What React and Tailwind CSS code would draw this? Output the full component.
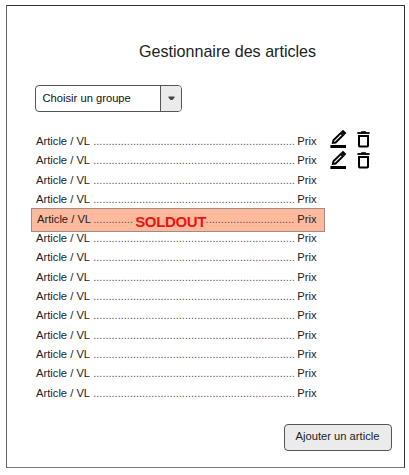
const ROWS = Array.from({ length: 14 }, (_, i) => ({ soldOut: i === 4, actions: i < 2, second: i === 1 }));

function EditIcon() {
  return (
    <svg width="18" height="19" viewBox="0 0 18 19" fill="none" stroke="#000">
      <path d="M2.9 12.9 L3.4 10.3 L10.8 3 L13 5.2 L5.6 12.5 Z" strokeWidth="1.9" />
      <path d="M12 1.9 L13 0.9 L15.2 3.1 L14.2 4.1 Z" strokeWidth="1.7" />
      <path d="M0.4 16.5 H16" strokeWidth="3" />
    </svg>
  );
}

function TrashIcon() {
  return (
    <svg width="14" height="19" viewBox="0 0 14 19" fill="none" stroke="#000">
      <path d="M0.4 3 H12.6" strokeWidth="1.8" />
      <path d="M4.2 2 H8.9" strokeWidth="1.6" />
      <path d="M2 6 H11 V15.8 Q11 16.6 10.2 16.6 H2.8 Q2 16.6 2 15.8 Z" strokeWidth="2" />
    </svg>
  );
}

function ArticleRow({ soldOut, actions, second }) {
  return (
    <li className="relative flex h-[19.38px] items-center">
      {soldOut && (
        <div className="absolute -left-[5px] -top-[1px] h-[24px] w-[294px] border border-[#a08c86] bg-[#ffb99d]" />
      )}
      <div className={`relative flex w-[280.5px] whitespace-nowrap ${soldOut ? 'top-[0.6px] pl-px' : ''}`}>
        <span>Article / VL</span>
        {soldOut ? (
          <span className="ml-auto mr-[3px] flex w-[201px] text-[11px] text-[#555]">
            <span className="w-[42px]">{'.'.repeat(13)}</span>
            <strong className="relative top-[3px] w-[70px] text-[15px] leading-[14px] tracking-[-0.35px] text-[#e81414]">SOLDOUT</strong>
            <span className="flex w-[89px] justify-end">{'.'.repeat(29)}</span>
          </span>
        ) : (
          <span className="ml-auto mr-[3px] w-[201px] text-[11px] text-[#555]">{'.'.repeat(66)}</span>
        )}
        <span>Prix</span>
      </div>
      {actions && (
        <div className={`relative flex w-[60px] pl-[13.5px] ${second ? 'top-0' : '-top-[1px]'}`}>
          <EditIcon />
          <span className="ml-[9px]"><TrashIcon /></span>
        </div>
      )}
    </li>
  );
}

export default function App() {
  return (
    <div className="h-[475px] w-[409px] bg-white pl-[6px] pt-[5px] font-['Liberation_Sans',Arial,sans-serif] text-[11.2px] leading-[14px] text-[#222]">
      <main className="flex h-[463px] w-[399px] flex-col border border-[#333] border-b-[#777] border-l-[#666]">
        <h1 className="ml-[132px] mt-[35px] text-[16.1px] leading-[20px]">Gestionnaire des articles</h1>
        <button className="ml-[28px] mt-[24px] flex h-[27px] w-[147px] shrink-0 overflow-hidden rounded-[4px] border border-[#555] bg-white text-left text-[#111]">
          <span className="flex h-full flex-1 items-center pb-[1px] pl-[6.5px]">Choisir un groupe</span>
          <span className="flex h-full w-[21px] items-center justify-center border-l border-[#555] bg-[#ebebeb]">
            <svg width="7" height="5" viewBox="0 0 7 5"><path d="M0.5 0.5 H6.5 V1.5 L4.5 4 H2.5 L0.5 1.5 Z" fill="#444" /></svg>
          </span>
        </button>
        <ul className="ml-[29px] mt-[19.2px]">
          {ROWS.map((row, i) => <ArticleRow key={i} {...row} />)}
        </ul>
        <button className="ml-[277px] mt-[21.5px] h-[27px] w-[108px] shrink-0 rounded-[4px] border border-[#555] bg-[#ebebeb] pb-[2px] pr-[1px]">
          Ajouter un article
        </button>
      </main>
    </div>
  );
}
